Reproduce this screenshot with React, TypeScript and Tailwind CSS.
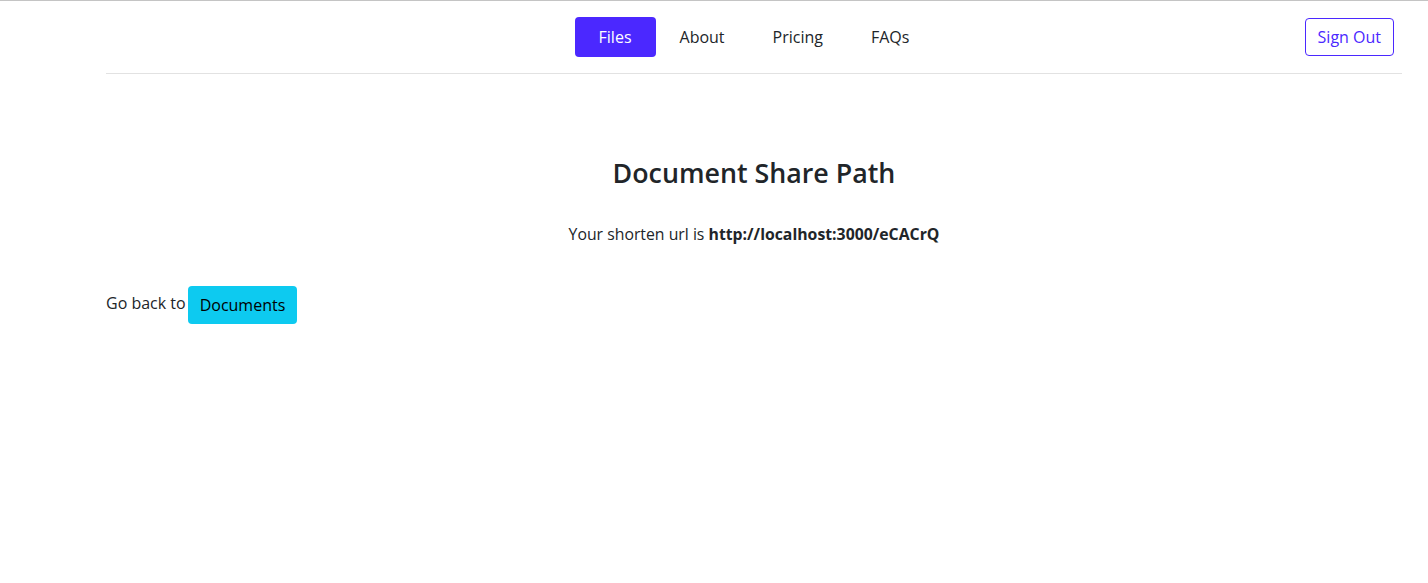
import React from "react";

const navItems = ["Files", "About", "Pricing", "FAQs"];

const App = () => {
  const active = "Files";

  return (
    <div
      className="min-h-[583px] bg-white text-[#212529] border-t border-[#c4c4c4]"
      style={{ fontFamily: "'Open Sans', 'Noto Sans', sans-serif" }}
    >
      <div className="pl-[106px] pr-[26px]">
        {/* header */}
        <header className="relative flex items-center justify-center h-[73px] border-b border-[#e2e2e2]">
          <nav className="flex items-center">
            {navItems.map((item) => (
              <a
                key={item}
                href="#"
                className={`px-6 h-10 flex items-center text-base rounded ${
                  item === active ? "bg-[#4b28ff] text-white" : "text-[#212529]"
                }`}
              >
                {item}
              </a>
            ))}
          </nav>
          <button className="absolute right-2 top-[17px] h-[38px] px-3 border border-[#4b28ff] text-[#4b28ff] rounded text-base">
            Sign Out
          </button>
        </header>

        {/* body */}
        <main className="pt-[82px]">
          <h2 className="text-center text-[26.8px] leading-[34px] font-semibold">
            Document Share Path
          </h2>
          <p className="mt-8 text-center text-[15.8px] leading-6">
            Your shorten url is <b className="font-bold">http://localhost:3000/eCACrQ</b>
          </p>
          <div className="mt-10 flex items-start gap-0.5">
            <span className="text-base leading-6 mt-[5px]">Go back to</span>
            <button className="h-[38px] px-3 bg-[#0dcaf0] text-black rounded text-base">
              Documents
            </button>
          </div>
        </main>
      </div>
    </div>
  );
};

export default App;
